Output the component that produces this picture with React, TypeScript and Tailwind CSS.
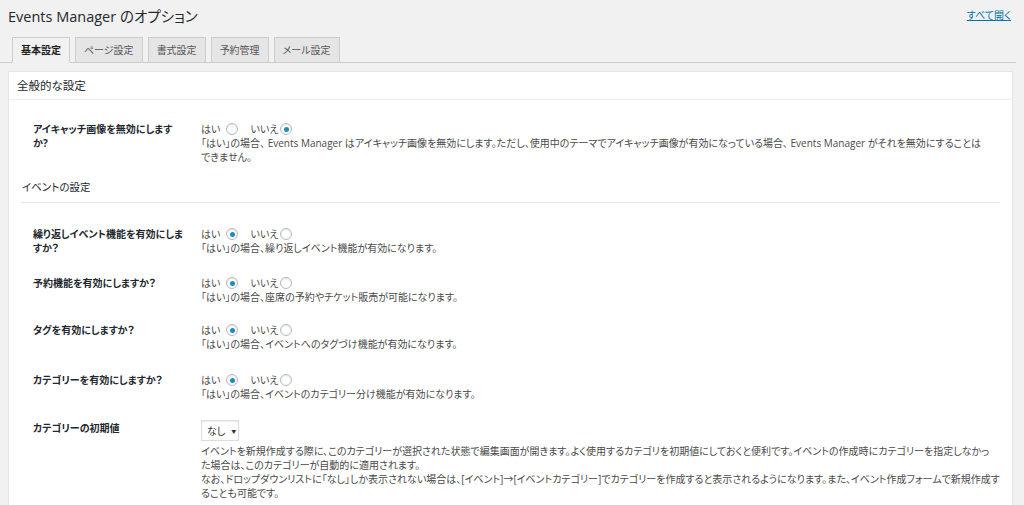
import React from "react";

const FONT = "[font-family:'Open_Sans','Noto_Sans_CJK_JP',sans-serif] [font-feature-settings:'palt']";

function Radio({ checked }: { checked?: boolean }) {
  return (
    <span className="inline-flex h-[12px] w-[12px] items-center justify-center rounded-full border border-[#b4b9be] bg-white shadow-[inset_0_1px_2px_rgba(0,0,0,0.1)]">
      {checked && <span className="h-[5px] w-[5px] rounded-full bg-[#1e8cbe]" />}
    </span>
  );
}

function YesNo({ yes }: { yes: boolean }) {
  return (
    <div className="flex h-[14px] items-center">
      <span>はい</span>
      <span className="ml-[6px] flex"><Radio checked={yes} /></span>
      <span className="ml-[12px]">いいえ</span>
      <span className="ml-[2px] flex"><Radio checked={!yes} /></span>
    </div>
  );
}

function Row({ label, children, className = "" }: { label: React.ReactNode; children: React.ReactNode; className?: string }) {
  return (
    <div className={"flex " + className}>
      <div className="w-[180px] shrink-0 pl-[12px] font-bold text-[#23282d]">{label}</div>
      <div className="flex-1 text-[#4a4a4a]">{children}</div>
    </div>
  );
}

function Lines({ lines }: { lines: string[] }) {
  return (
    <div>
      {lines.map((l, i) => (
        <div key={i} className="whitespace-nowrap">{l}</div>
      ))}
    </div>
  );
}

export default function App() {
  const tabs = ["基本設定", "ページ設定", "書式設定", "予約管理", "メール設定"];
  return (
    <div className={"min-h-screen bg-[#f1f1f1] text-[10px] leading-[14px] text-[#444] " + FONT}>
      <div className="flex items-start justify-between pl-[8px] pr-[13px] pt-[6px]">
        <h1 className="text-[14.5px] leading-[22px] text-[#23282d]">Events Manager のオプション</h1>
        <a className="mt-[2px] text-[10px] leading-[14px] text-[#0073aa] underline">すべて開く</a>
      </div>
      <div className="mr-[8px] mt-[9px] flex gap-[5px] border-b border-[#ccc] pl-[12px]">
        {tabs.map((t, i) => (
          <div
            key={t}
            className={
              "-mb-px flex h-[26px] items-center border border-[#ccc] px-[8px] text-[10px] " +
              (i === 0 ? "border-b-[#f1f1f1] bg-[#f1f1f1] font-bold text-[#222]" : "bg-[#e5e5e5] text-[#555]")
            }
          >
            {t}
          </div>
        ))}
      </div>
      <div className="ml-[8px] mr-[11px] mt-[8px] border border-[#e5e5e5] bg-white pb-[20px]">
        <div className="flex h-[28px] items-center border-b border-[#eee] pl-[8px] text-[11.5px] text-[#23282d]">全般的な設定</div>
        <div className="px-[12px] pt-[22px]">
          <Row label={<>アイキャッチ画像を無効にします<br />か?</>}>
            <YesNo yes={false} />
            <Lines
              lines={[
                "「はい」の場合、 Events Manager はアイキャッチ画像を無効にします。ただし、使用中のテーマでアイキャッチ画像が有効になっている場合、 Events Manager がそれを無効にすることは",
                "できません。",
              ]}
            />
          </Row>
          <div className="mt-[16px] border-b border-[#e5e5e5] pb-[8px] pl-[1px] text-[10.5px] text-[#23282d]">イベントの設定</div>
          <Row className="mt-[24px]" label={<>繰り返しイベント機能を有効にしま<br />すか？</>}>
            <YesNo yes={true} />
            <div>「はい」の場合、繰り返しイベント機能が有効になります。</div>
          </Row>
          <Row className="mt-[21px]" label="予約機能を有効にしますか？">
            <YesNo yes={true} />
            <div>「はい」の場合、座席の予約やチケット販売が可能になります。</div>
          </Row>
          <Row className="mt-[19px]" label="タグを有効にしますか？">
            <YesNo yes={true} />
            <div>「はい」の場合、イベントへのタグづけ機能が有効になります。</div>
          </Row>
          <Row className="mt-[22px]" label="カテゴリーを有効にしますか？">
            <YesNo yes={true} />
            <div>「はい」の場合、イベントのカテゴリー分け機能が有効になります。</div>
          </Row>
          <Row className="mt-[20px]" label="カテゴリーの初期値">
            <div className="-mt-[1px] mb-[3px] flex h-[21px] w-[38px] items-center border border-[#ddd] bg-white pl-[5px] text-[#333] shadow-[inset_0_1px_2px_rgba(0,0,0,0.07)]">
              <span>なし</span>
              <span className="ml-[6px] text-[5px]">▼</span>
            </div>
            <Lines
              lines={[
                "イベントを新規作成する際に、このカテゴリーが選択された状態で編集画面が開きます。よく使用するカテゴリを初期値にしておくと便利です。イベントの作成時にカテゴリーを指定しなかっ",
                "た場合は、このカテゴリーが自動的に適用されます。",
                "なお、ドロップダウンリストに「なし」しか表示されない場合は、[イベント]→[イベントカテゴリー]でカテゴリーを作成すると表示されるようになります。また、イベント作成フォームで新規作成す",
                "ることも可能です。",
              ]}
            />
          </Row>
        </div>
      </div>
    </div>
  );
}
